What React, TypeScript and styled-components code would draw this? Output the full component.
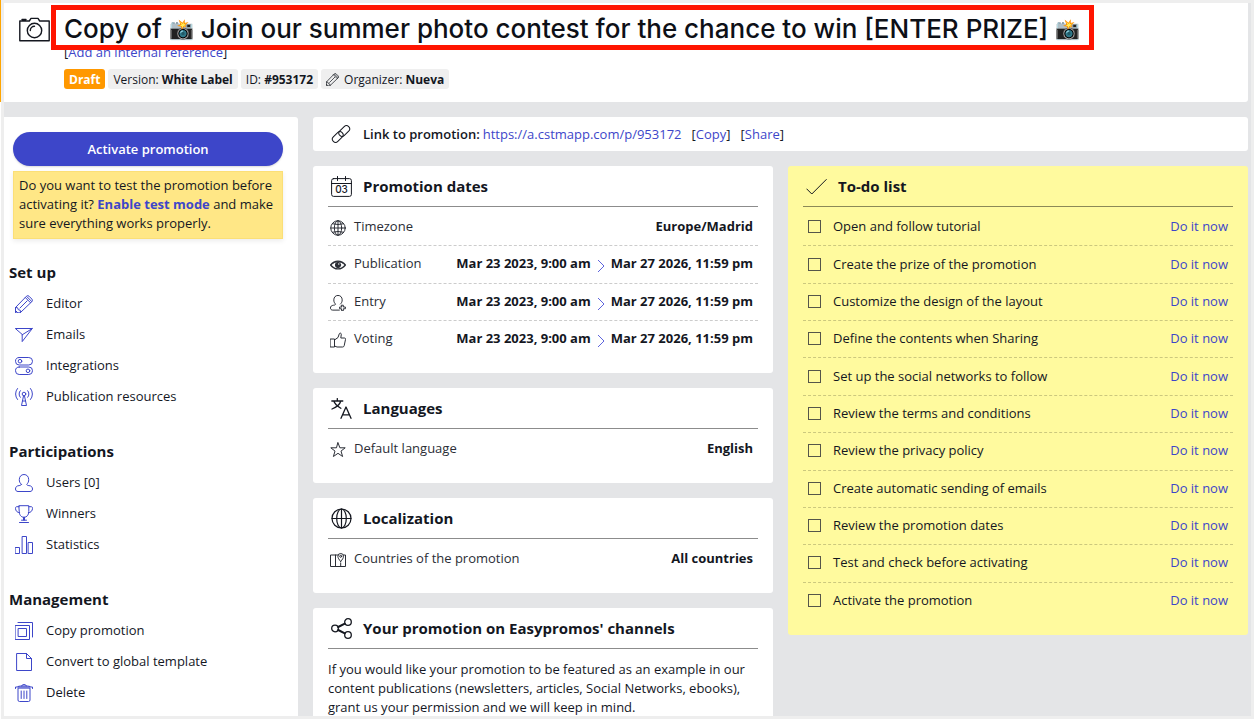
import React from "react";
import styled, { createGlobalStyle } from "styled-components";

const ink = "#14171f";
const blue = "#3d46c9";

const GlobalStyle = createGlobalStyle`
  *, *::before, *::after { box-sizing: border-box; }
  body {
    margin: 0;
    background: #fff;
    color: ${ink};
    font-family: "Open Sans", "Noto Sans", sans-serif;
    font-size: 13px;
    line-height: 19px;
  }
  a { color: ${blue}; text-decoration: none; }
  h1, h2, ul, p { margin: 0; padding: 0; }
  ul { list-style: none; }
`;

/* ---------- page frame ---------- */

const Frame = styled.div`
  height: calc(100vh - 1px);
  margin-left: 1px;
  padding: 3px;
  overflow: hidden;
  background: #eeeeee;
`;

const Canvas = styled.div`
  height: 100%;
  overflow: hidden;
  background: #e4e5e7;
  padding-right: 3px;
`;

const Header = styled.header`
  position: relative;
  display: flex;
  gap: 14px;
  padding: 14px 15px 13px;
  background: #fff;
  border-radius: 0 0 3px 0;
`;

const StatusEdge = styled.span`
  position: fixed;
  left: 0;
  top: 0;
  width: 1px;
  height: 102px;
  background: #ffa500;
`;

const HeaderIcon = styled.div`
  flex: none;
  width: 31px;
  height: 26px;
`;

const HeaderText = styled.div`
  flex: 1;
  min-width: 0;
`;

const Title = styled.h1`
  position: relative;
  width: fit-content;
  font-family: Inter, "Open Sans", sans-serif;
  font-size: 26px;
  line-height: 24px;
  font-weight: 500;
  white-space: nowrap;
  color: #0d1017;

  &::after {
    content: "";
    position: absolute;
    inset: -12px -14px -9px -13px;
    border: 5px solid #ff1400;
  }
`;

const Emoji = styled.span`
  font-size: 20px;
  line-height: 20px;
  vertical-align: 2px;
`;

const Reference = styled.p`
  margin-top: 2px;
`;

const Badges = styled.div`
  display: flex;
  gap: 3px;
  margin-top: 7px;
`;

const Badge = styled.span<{ $draft?: boolean }>`
  display: flex;
  align-items: center;
  gap: 5px;
  height: 20px;
  padding: 0 5px;
  border-radius: 3px;
  font-size: 12px;
  white-space: nowrap;
  background: ${(p) => (p.$draft ? "#ff9800" : "#efefef")};
  color: ${(p) => (p.$draft ? "#fff" : ink)};
  font-weight: ${(p) => (p.$draft ? 700 : 400)};
`;

const Body = styled.div`
  display: grid;
  grid-template-columns: 294px minmax(0, 1fr);
  gap: 15px;
  padding-top: 15px;
`;

/* ---------- sidebar ---------- */

const Sidebar = styled.aside`
  min-height: 100vh;
  padding: 15px 15px 15px 9px;
  background: #fff;
  border-radius: 0 3px 0 0;
`;

const Activate = styled.button`
  display: block;
  width: 100%;
  height: 34px;
  border: 0;
  border-radius: 17px;
  background: ${blue};
  color: #fff;
  font: 600 13px "Open Sans", sans-serif;
  box-shadow: 0 1px 2px rgba(0, 0, 0, 0.15);
`;

const Notice = styled.p`
  margin: 5px 0 18px;
  padding: 4px 5px 5px;
  border: 1px solid #fbdf77;
  background: #ffe786;
  box-shadow: 0 2px 5px rgba(0, 0, 0, 0.08);

  a { font-weight: 700; }
`;

const Menu = styled.nav`
  margin-bottom: 24px;
`;

const MenuTitle = styled.h2`
  margin-left: -4px;
  font-size: 15px;
  line-height: 31px;
  font-weight: 700;
`;

const MenuLink = styled.a`
  display: flex;
  align-items: center;
  gap: 13px;
  height: 31px;
  padding-left: 2px;
  color: ${ink};

  svg {
    margin-top: 1px;
    color: ${blue};
  }
`;

/* ---------- cards ---------- */

const Main = styled.main`
  display: flex;
  flex-direction: column;
  gap: 15px;
`;

const LinkBar = styled.section`
  display: flex;
  align-items: center;
  gap: 10px;
  height: 34px;
  padding: 0 18px;
  background: #fff;
  border-radius: 3px;

  svg { margin-right: 2px; }
  strong { margin-right: 3px; font-weight: 600; }
`;

const Columns = styled.div`
  display: grid;
  grid-template-columns: minmax(0, 1fr) minmax(0, 1fr);
  align-items: start;
  gap: 15px;
`;

const Stack = styled.div`
  display: grid;
  gap: 15px;
`;

const Card = styled.section<{ $note?: boolean }>`
  padding: 0 15px 15px;
  border-radius: 3px;
  background: ${(p) => (p.$note ? "#fffa9e" : "#fff")};
`;

const CardHead = styled.h2`
  display: flex;
  align-items: center;
  gap: 11px;
  height: 41px;
  padding-left: 3px;
  border-bottom: 1px solid rgba(0, 0, 0, 0.45);
  font-size: 15px;
  font-weight: 700;
`;

const Rows = styled.ul<{ $height: number }>`
  display: grid;
  grid-auto-rows: 1fr;
  min-height: ${(p) => p.$height}px;
  padding-top: 2px;
`;

const Row = styled.li`
  display: flex;
  align-items: center;
  padding: 0 5px 1px 0;
  border-bottom: 1px dashed rgba(0, 0, 0, 0.2);

  &:last-child { border-bottom-color: transparent; }
`;

const RowLabel = styled.span`
  display: flex;
  align-items: center;
  gap: 8px;
  margin-right: auto;
  padding-left: 2px;
  color: #2b2e36;

  svg { margin-top: 3px; }
`;

const Value = styled.span`
  display: flex;
  gap: 6px;
  font-weight: 700;

  svg { margin-top: 5px; }
`;

const Task = styled.label`
  display: flex;
  align-items: center;
  gap: 12px;
  margin-right: auto;
  padding-left: 5px;
`;

const Tick = styled.input`
  appearance: none;
  width: 13px;
  height: 13px;
  margin: 0;
  border: 1px solid #55554a;
`;

const Paragraph = styled.p`
  padding-top: 11px;
`;

/* ---------- icons ---------- */

type IconProps = { w?: number; h?: number; box?: string; sw?: number; children: React.ReactNode };

const Icon = ({ w = 18, h = w, box = `0 0 ${w} ${h}`, sw = 1, children }: IconProps) => (
  <svg width={w} height={h} viewBox={box} fill="none" stroke="currentColor" strokeWidth={sw}
    strokeLinejoin="round" strokeLinecap="round" aria-hidden="true">
    {children}
  </svg>
);

const Pencil = ({ size = 18 }: { size?: number }) => (
  <Icon w={size} box="0 0 18 18">
    <path d="M.5 17.500v-5L11.500 1.200a1.800 1.800 0 0 1 2.500 0l2.900 2.900a1.800 1.800 0 0 1 0 2.500L5.500 17.500zM.5 12.500l2 .2.800 2 2 .6.200 2.200M5 13 12.200 5.800M10.300 2.500l5.200 5.200M12 1.800l4.700 4.700M.5 15.500l2 2" />
  </Icon>
);
const Plane = () => (
  <Icon><path d="M.7 2.500h16.600L7.200 15.600V8.800zM7.200 8.800l10.100-6.300" /></Icon>
);
const Toggles = () => (
  <Icon>
    <rect x=".5" y=".5" width="17" height="7.500" rx="3.700" /><circle cx="5" cy="4.200" r="1.800" />
    <rect x=".5" y="10" width="17" height="7.500" rx="3.700" /><circle cx="13" cy="13.800" r="1.800" />
  </Icon>
);
const Antenna = () => (
  <Icon>
    <circle cx="9" cy="6" r="1.800" />
    <path d="m8.500 8-2 9.500h5l-2-9.500M7.500 13h3M5.300 9.300a4.800 4.800 0 0 1 0-6.600M12.700 9.300a4.800 4.800 0 0 0 0-6.600M2.500 11.500a8.500 8.500 0 0 1 0-11M15.500 11.500a8.500 8.500 0 0 0 0-11" />
  </Icon>
);
const Person = () => (
  <Icon>
    <path d="M6.300 10.300C4.800 9 4.300 7.600 4.300 5.600 4.300 2.600 6.200.5 9 .5s4.700 2.100 4.700 5.100c0 2-.5 3.400-2 4.700.3 1 1 1.200 2.300 1.300 2.300.2 3.500 1.500 3.500 3.400 0 1.500-1 2.500-2.500 2.500H3C1.500 17.500.5 16.500.5 15c0-1.900 1.200-3.200 3.500-3.400 1.300-.1 2-.3 2.300-1.300z" />
  </Icon>
);
const Trophy = () => (
  <Icon>
    <path d="M4.200.7h9.600v5.800c0 3.500-2 5.800-4.800 5.800S4.200 10 4.200 6.500zM4.200 1.700H1.800C.8 1.700.5 2.400.5 3.300c0 2.500 1.700 4.400 4.200 4.500M13.800 1.700h2.400c1 0 1.300.7 1.300 1.600 0 2.500-1.700 4.400-4.200 4.500M8.500 12.300V15M9.500 12.300V15M6.500 15.200h5M4.500 17.500h9" />
  </Icon>
);
const Bars = () => (
  <Icon><path d="M.5 11.500h4v6h-4zM7.500.5h4v17h-4zM13.500 6.500h4v11h-4z" /></Icon>
);
const CopyFrames = () => (
  <Icon><path d="M.5 3.500h14v14H.5zM3.500 6.500h8v8h-8zM3 .5h14.500V15" /></Icon>
);
const Page = () => (
  <Icon><path d="M2 .5h9.500l5 5v12H2zM11.500.5v5h5" /></Icon>
);
const Trash = () => (
  <Icon>
    <path d="M.5 4.500V3h17v1.500M3 2.500 5.500 2h7l2.500.5M6.500 2Q6.800.5 9 .5T11.500 2M3 4.500V16q0 1.500 1.500 1.500h9Q15 17.500 15 16V4.500zM6.200 7v7.500M9 7v7.500M11.800 7v7.500" />
  </Icon>
);
const Chain = () => (
  <Icon w={20}>
    <rect x="7" y="3.800" width="12.500" height="6.400" rx="3.200" transform="rotate(-45 13.300 7)" />
    <rect x=".5" y="9.800" width="12.500" height="6.400" rx="3.200" transform="rotate(-45 6.700 13)" />
  </Icon>
);
const Camera = () => (
  <Icon w={31} h={26} sw={1.4}>
    <path d="M.8 4h9.500L12 1.400h7L20.700 4h9.500v19.800H.8zM3 2.500h4" />
    <circle cx="15.500" cy="13.500" r="7.200" /><path d="M11.300 13.500a4.200 4.200 0 0 1 4.200-4.200" />
  </Icon>
);
const CalendarText = styled.text`
  font: 500 10px Inter, sans-serif;
`;
const Calendar = () => (
  <Icon w={21}>
    <rect x=".6" y="2.600" width="19.800" height="17.800" rx="2" />
    <path d="M.6 7.500h19.800M6.500.5v4M14.500.5v4" />
    <CalendarText x="10.500" y="17" textAnchor="middle" fill="currentColor" stroke="none">03</CalendarText>
  </Icon>
);
const Globe = ({ size = 16 }: { size?: number }) => (
  <Icon w={size} box="0 0 21 21" sw={size > 18 ? 1.2 : 1.3}>
    <circle cx="10.500" cy="10.500" r="9.500" /><ellipse cx="10.500" cy="10.500" rx="4.800" ry="9.500" />
    <path d={size > 18 ? "M10.500 1v19M1 10.500h19" : "M10.500 1v19M1 10.500h19M3.500 5q7 2 14 0M3.500 16q7-2 14 0"} />
  </Icon>
);
const Eye = () => (
  <Icon w={16}>
    <path strokeWidth="1.300" d="M.6 8C4.500 2.800 11.500 2.800 15.400 8 11.500 13.200 4.500 13.200.6 8z" />
    <circle cx="8" cy="8" r="2.600" fill="currentColor" />
    <circle cx="8.800" cy="7" r=".7" fill="#fff" stroke="none" />
    <path d="M1.500 7.500C5 3.800 11 3.800 14.500 7.500" />
  </Icon>
);
const PersonPlus = () => (
  <Icon w={16} box="0 0 18 18" sw={1.1}>
    <path d="M10.500 17H3C1.500 17 .5 16 .5 14.700c0-1.900 1.200-3 3.500-3.200 1.300-.1 2-.3 2.300-1.300-1.500-1.300-2-2.700-2-4.700C4.300 2.500 6.200.5 9 .5s4.700 2 4.700 5c0 2-.5 3.400-2 4.700" />
    <path d="M13 11.500h2v2h2.300v2H15v2.200h-2v-2.200h-2.200v-2H13z" />
  </Icon>
);
const Thumb = () => (
  <Icon w={16}>
    <path d="M.5 7h4v8h-4zM4.500 8 8 5.500l1.300-3.700c.4-1.100 2-.9 2 .5L10.800 6h3.700q1.200.1 1 1.400l-1.300 6.300q-.3 1.300-1.600 1.300H7l-2.500-1" />
  </Icon>
);
const Star = () => (
  <Icon w={16}>
    <path d="m8 .8 1.900 5h5.300l-4.200 3.300 1.600 5.400L8 11.300l-4.600 3.200L5 9.100.8 5.800h5.300z" />
  </Icon>
);
const MapPin = () => (
  <Icon w={16}>
    <path d="M8 3H.5v11.500h15V3h-2M5.500 3v11.500M10.700 11v3.500M10.700 9.500C9 7.500 7.900 6 7.900 4.300a2.800 2.800 0 0 1 5.600 0c0 1.700-1.100 3.200-2.800 5.200z" />
    <circle cx="10.700" cy="4.300" r="1" />
  </Icon>
);
const Translate = () => (
  <Icon w={21} sw={1.3}>
    <path d="M.8 3h11M6.300.6V3M1 11C5 9.500 8.700 7 9.800 3M2.800 3c1 3 4 5.500 7 7.300M10 20.300l5-11.300 5 11.300M11.500 16.800h7" />
  </Icon>
);
const ShareNodes = () => (
  <Icon w={21} sw={1.3}>
    <circle cx="17" cy="4" r="3.300" /><circle cx="4" cy="10.500" r="3.300" /><circle cx="17" cy="17" r="3.300" />
    <path strokeWidth="2" d="m7.200 9 6.600-3.300M7.200 12l6.600 3.300" />
  </Icon>
);
const Check = () => <Icon w={21}><path d="m.8 13 5 5L20.300 3.500" /></Icon>;
const Chevron = () => (
  <svg width="8" height="14" viewBox="0 0 8 14" fill="none" stroke="#5d64dd" aria-hidden="true">
    <path d="m1 1 6 6-6 6" />
  </svg>
);

/* ---------- content ---------- */

const menus = [
  {
    title: "Set up",
    items: [
      { icon: <Pencil />, text: "Editor" },
      { icon: <Plane />, text: "Emails" },
      { icon: <Toggles />, text: "Integrations" },
      { icon: <Antenna />, text: "Publication resources" },
    ],
  },
  {
    title: "Participations",
    items: [
      { icon: <Person />, text: "Users [0]" },
      { icon: <Trophy />, text: "Winners" },
      { icon: <Bars />, text: "Statistics" },
    ],
  },
  {
    title: "Management",
    items: [
      { icon: <CopyFrames />, text: "Copy promotion" },
      { icon: <Page />, text: "Convert to global template" },
      { icon: <Trash />, text: "Delete" },
    ],
  },
];

const periods = [
  { icon: <Eye />, text: "Publication" },
  { icon: <PersonPlus />, text: "Entry" },
  { icon: <Thumb />, text: "Voting" },
];

const tasks = [
  "Open and follow tutorial",
  "Create the prize of the promotion",
  "Customize the design of the layout",
  "Define the contents when Sharing",
  "Set up the social networks to follow",
  "Review the terms and conditions",
  "Review the privacy policy",
  "Create automatic sending of emails",
  "Review the promotion dates",
  "Test and check before activating",
  "Activate the promotion",
];

export default function App() {
  return (
    <>
      <GlobalStyle />
      <StatusEdge />
      <Frame>
        <Canvas>
          <Header>
            <HeaderIcon><Camera /></HeaderIcon>
            <HeaderText>
              <Title>
                Copy of <Emoji>📸</Emoji> Join our summer photo contest for the chance to win [ENTER PRIZE] <Emoji>📸</Emoji>
              </Title>
              <Reference>[<a href="#reference">Add an internal reference</a>]</Reference>
              <Badges>
                <Badge $draft>Draft</Badge>
                <Badge><span>Version: <b>White Label</b></span></Badge>
                <Badge><span>ID: <b>#953172</b></span></Badge>
                <Badge><Pencil size={13} /><span>Organizer: <b>Nueva</b></span></Badge>
              </Badges>
            </HeaderText>
          </Header>
          <Body>
            <Sidebar>
              <Activate type="button">Activate promotion</Activate>
              <Notice>
                Do you want to test the promotion before activating it?{" "}
                <a href="#test">Enable test mode</a> and make sure everything works properly.
              </Notice>
              {menus.map((menu) => (
                <Menu key={menu.title} aria-label={menu.title}>
                  <MenuTitle>{menu.title}</MenuTitle>
                  <ul>
                    {menu.items.map((item) => (
                      <li key={item.text}>
                        <MenuLink href="#menu">{item.icon}{item.text}</MenuLink>
                      </li>
                    ))}
                  </ul>
                </Menu>
              ))}
            </Sidebar>
            <Main>
              <LinkBar>
                <Chain />
                <span>
                  <strong>Link to promotion:</strong>
                  <a href="#promotion">https://a.cstmapp.com/p/953172</a>
                </span>
                <span>[<a href="#copy">Copy</a>]</span>
                <span>[<a href="#share">Share</a>]</span>
              </LinkBar>
              <Columns>
                <Stack>
                  <Card>
                    <CardHead><Calendar />Promotion dates</CardHead>
                    <Rows $height={151}>
                      <Row>
                        <RowLabel><Globe />Timezone</RowLabel>
                        <Value>Europe/Madrid</Value>
                      </Row>
                      {periods.map((period) => (
                        <Row key={period.text}>
                          <RowLabel>{period.icon}{period.text}</RowLabel>
                          <Value>
                            <span>Mar 23 2023, 9:00 am</span>
                            <Chevron />
                            <span>Mar 27 2026, 11:59 pm</span>
                          </Value>
                        </Row>
                      ))}
                    </Rows>
                  </Card>
                  <Card>
                    <CardHead><Translate />Languages</CardHead>
                    <Rows $height={39}>
                      <Row>
                        <RowLabel><Star />Default language</RowLabel>
                        <Value>English</Value>
                      </Row>
                    </Rows>
                  </Card>
                  <Card>
                    <CardHead><Globe size={21} />Localization</CardHead>
                    <Rows $height={39}>
                      <Row>
                        <RowLabel><MapPin />Countries of the promotion</RowLabel>
                        <Value>All countries</Value>
                      </Row>
                    </Rows>
                  </Card>
                  <Card>
                    <CardHead><ShareNodes />Your promotion on Easypromos' channels</CardHead>
                    <Paragraph>
                      If you would like your promotion to be featured as an example in our content
                      publications (newsletters, articles, Social Networks, ebooks), grant us your
                      permission and we will keep in mind.
                    </Paragraph>
                  </Card>
                </Stack>
                <Card $note>
                  <CardHead><Check />To-do list</CardHead>
                  <Rows $height={413}>
                    {tasks.map((task) => (
                      <Row key={task}>
                        <Task><Tick type="checkbox" />{task}</Task>
                        <a href="#task">Do it now</a>
                      </Row>
                    ))}
                  </Rows>
                </Card>
              </Columns>
            </Main>
          </Body>
        </Canvas>
      </Frame>
    </>
  );
}
